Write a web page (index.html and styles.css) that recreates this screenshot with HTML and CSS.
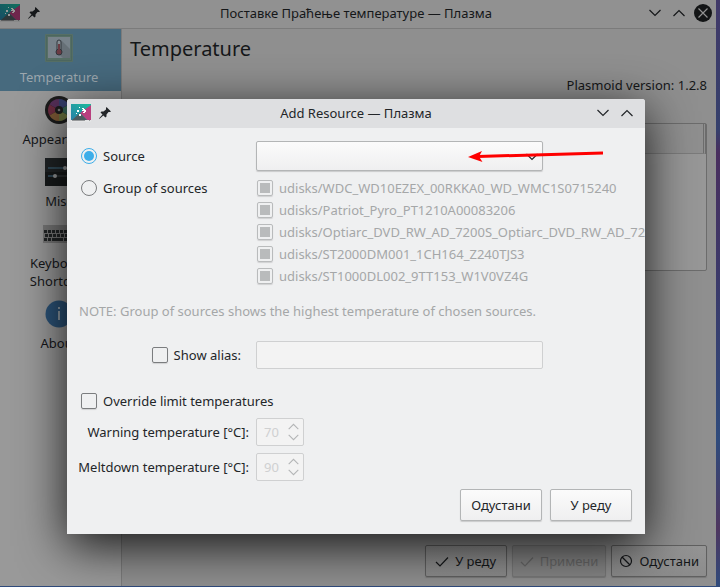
FILE: index.html
```html
<!DOCTYPE html>
<html lang="sr">
<head>
<meta charset="utf-8">
<title>Поставке Праћење температуре — Плазма</title>
<link rel="stylesheet" href="styles.css">
</head>
<body>
<svg class="defs" aria-hidden="true">
  <defs>
    <linearGradient id="teal" x1="0" y1="1" x2="1" y2="0"><stop offset="0" stop-color="#2980a8"/><stop offset="1" stop-color="#1abc9c"/></linearGradient>
    <symbol id="plasma" viewBox="0 0 20 18">
      <path d="M0 0h20v16H0z" fill="url(#teal)"/>
      <path d="M20 1v15h-4L9 9z" fill="#b8407f"/>
      <path d="M9 9l7 7H1z" fill="#4c5c60"/>
      <path d="M11 4h2v1h1v1h1v2h-1v1h-2V8h1V7h-2V6h1V5h-1zM6 6h2v2H6zM8 3h1v1H8zM8 10h2v2H8zM5 9h1v1H5z" fill="#fff"/>
      <path d="M0 16h20v2H0z" fill="#e3e4e5"/>
      <path d="M1 16h13v1H1zM18 16h1v1h-1z" fill="#97999b"/>
    </symbol>
    <symbol id="pin" viewBox="0 0 12 12">
      <path d="M7.500 0L12 4.500l-1 .5-1.500 0L7.500 7.500 7.500 9.500 6.500 10.500 4.300 8.400 .6 11.800 0 11.400 3.500 7.600 1.500 5.500 2.500 4.500 4.500 4.500 7 2.500 7 1z" fill="currentColor"/>
    </symbol>
    <symbol id="down" viewBox="0 0 12 8"><path d="M.5 1L6 6.500 11.500 1" fill="none" stroke="currentColor" stroke-width="1.200"/></symbol>
    <symbol id="up" viewBox="0 0 12 8"><path d="M.5 7L6 1.500 11.500 7" fill="none" stroke="currentColor" stroke-width="1.200"/></symbol>
    <symbol id="check" viewBox="0 0 14 14"><path d="M1 8l4 4 8-8.500" fill="none" stroke="currentColor" stroke-width="1.200"/></symbol>
    <symbol id="cancel" viewBox="0 0 14 14"><g fill="none" stroke="currentColor" stroke-width="1.200"><circle cx="7" cy="7" r="5.500"/><path d="M3 3l8 8"/></g></symbol>
  </defs>
</svg>

<div class="window">
  <header class="titlebar">
    <div class="title-icons"><svg class="app-icon faded"><use href="#plasma"/></svg><svg class="pin-icon"><use href="#pin"/></svg></div>
    <div class="title">Поставке Праћење температуре — Плазма</div>
    <div class="controls">
      <button aria-label="Minimize"><svg class="chevron"><use href="#down"/></svg></button>
      <button aria-label="Maximize"><svg class="chevron"><use href="#up"/></svg></button>
      <button aria-label="Close"><svg class="close" viewBox="0 0 18 18"><circle cx="9" cy="9" r="9" fill="#131516"/><path d="M4.500 4.500l9 9M13.500 4.500l-9 9" stroke="#919191" stroke-width="1.200"/></svg></button>
    </div>
  </header>
  <div class="content">
    <nav class="sidebar">
      <a href="#temperature" class="nav-item active">
        <svg viewBox="0 0 28 28"><rect width="28" height="28" rx="1" fill="#566f65"/><rect x="1.500" y="1.500" width="25" height="25" fill="none" stroke="#4d675f"/><rect x="3" y="3" width="22" height="21" fill="#77828a"/><path d="M16 6l9 9v9h-7l-6-5z" fill="#667077"/><rect x="12" y="6" width="4" height="11" rx="2" fill="#868e93" stroke="#30363c"/><circle cx="14" cy="18" r="3" fill="#6b3b43" stroke="#30363c"/><path d="M14 10v8" stroke="#6b3b43" stroke-width="2"/></svg>
        <span>Temperature</span>
      </a>
      <a href="#appearance" class="nav-item">
        <svg viewBox="0 0 28 28"><circle cx="14" cy="14" r="14" fill="#1c1c1c"/><path d="M14 14V3A11 11 0 0 0 4.500 8.500z" fill="#57305a"/><path d="M14 14L4.500 8.500A11 11 0 0 0 4.500 19.500z" fill="#6c2c40"/><path d="M14 14l-9.500 5.500A11 11 0 0 0 14 25z" fill="#7c5935"/><path d="M14 14v11a11 11 0 0 0 9.500-5.500z" fill="#68703c"/><path d="M14 14l9.500 5.500a11 11 0 0 0 0-11z" fill="#345f50"/><path d="M14 14l9.500-5.500A11 11 0 0 0 14 3z" fill="#353f6d"/><circle cx="14" cy="14" r="4" fill="#1c1c1c"/><circle cx="14" cy="14" r="1.300" fill="#777"/></svg>
        <span>Appearance</span>
      </a>
      <a href="#misc" class="nav-item">
        <svg viewBox="0 0 28 28"><path d="M0 0h28v28H0z" fill="#202426"/><path d="M0 14h28v14H0z" fill="#171a1b"/><path d="M3 10h22M3 18h22" stroke="#42494c"/><path d="M3 10h17M3 18h7" stroke="#35617b"/><circle cx="20" cy="10" r="2" fill="#989a9b"/><circle cx="10" cy="18" r="2" fill="#989a9b"/></svg>
        <span>Misc</span>
      </a>
      <a href="#shortcuts" class="nav-item">
        <svg class="keyboard" viewBox="0 0 32 28"><path d="M0 5h32v18H0z" fill="#777"/><path d="M1 11.500h30M2 15.500h29M1 19.500h30" stroke="#222526" stroke-width="3" stroke-dasharray="3 1"/><path d="M9 19.500h10" stroke="#222526" stroke-width="3"/></svg>
        <span>Keyboard Shortcuts</span>
      </a>
      <a href="#about" class="nav-item">
        <svg viewBox="0 0 28 28"><circle cx="14" cy="14" r="13.500" fill="#2b5378"/><path d="M13 11h2v9h-2zM13 7h2v2h-2z" fill="#8e9ba5"/></svg>
        <span>About</span>
      </a>
    </nav>
    <main class="page">
      <h1>Temperature</h1>
      <p class="version">Plasmoid version: 1.2.8</p>
      <div class="resources"><div class="resources-head"></div></div>
      <div class="actions">
        <button class="btn"><svg><use href="#check"/></svg>У реду</button>
        <button class="btn" disabled><svg><use href="#check"/></svg>Примени</button>
        <button class="btn"><svg><use href="#cancel"/></svg>Одустани</button>
      </div>
    </main>
  </div>
</div>

<section class="dialog" role="dialog" aria-labelledby="dialog-title">
  <header class="titlebar">
    <div class="title-icons"><svg class="app-icon"><use href="#plasma"/></svg><svg class="pin-icon"><use href="#pin"/></svg></div>
    <div class="title" id="dialog-title">Add Resource — Плазма</div>
    <div class="controls">
      <button aria-label="Minimize"><svg class="chevron"><use href="#down"/></svg></button>
      <button aria-label="Maximize"><svg class="chevron"><use href="#up"/></svg></button>
    </div>
  </header>
  <form class="form">
    <div class="row">
      <label class="option"><input type="radio" name="kind" checked>Source</label>
      <div class="combo"><select aria-label="Source"><option></option></select><svg><use href="#down"/></svg></div>
    </div>
    <div class="row group">
      <label class="option"><input type="radio" name="kind">Group of sources</label>
      <div class="sources">
        <label><input type="checkbox" checked disabled>udisks/WDC_WD10EZEX_00RKKA0_WD_WMC1S0715240</label>
        <label><input type="checkbox" checked disabled>udisks/Patriot_Pyro_PT1210A00083206</label>
        <label><input type="checkbox" checked disabled>udisks/Optiarc_DVD_RW_AD_7200S_Optiarc_DVD_RW_AD_72</label>
        <label><input type="checkbox" checked disabled>udisks/ST2000DM001_1CH164_Z240TJS3</label>
        <label><input type="checkbox" checked disabled>udisks/ST1000DL002_9TT153_W1V0VZ4G</label>
      </div>
    </div>
    <p class="note">NOTE: Group of sources shows the highest temperature of chosen sources.</p>
    <div class="row alias">
      <label class="option end"><input type="checkbox">Show alias:</label>
      <input class="field" type="text" aria-label="Alias" disabled>
    </div>
    <label class="option override"><input type="checkbox">Override limit temperatures</label>
    <div class="row limit">
      <label class="end" for="warning">Warning temperature [°C]:</label>
      <div class="spin"><input id="warning" type="number" value="70" disabled><span><svg><use href="#up"/></svg><svg><use href="#down"/></svg></span></div>
    </div>
    <div class="row limit">
      <label class="end" for="meltdown">Meltdown temperature [°C]:</label>
      <div class="spin"><input id="meltdown" type="number" value="90" disabled><span><svg><use href="#up"/></svg><svg><use href="#down"/></svg></span></div>
    </div>
    <div class="actions">
      <button type="button" class="btn">Одустани</button>
      <button type="button" class="btn">У реду</button>
    </div>
  </form>
  <svg class="pointer" viewBox="0 0 136 14"><path d="M10 7.500L135 4" stroke="#fe0000" stroke-width="3"/><path d="M0 8l14-6-3 5.500 3.500 5.500z" fill="#fe0000"/></svg>
</section>
</body>
</html>
```

FILE: styles.css
```css
* { box-sizing: border-box; }

body {
  margin: 0;
  min-height: 100vh;
  display: flex;
  position: relative;
  overflow: hidden;
  padding: 0 4px 1px 0;
  background: linear-gradient(#413968, #35406c 22%, #492e5e 26%, #3a3b6b 50%, #2f4b7c 75%, #4e365f 90%, #2f4b7c);
  font: 13px/18px "Noto Sans", sans-serif;
  color: #232629;
}

button, input, select { font: inherit; color: inherit; margin: 0; }
h1, p { margin: 0; font-weight: 400; }
.defs { position: absolute; width: 0; height: 0; }

.window {
  flex: 1;
  display: flex;
  flex-direction: column;
  background: #8f8f8f;
  color: #151719;
}

.titlebar {
  display: grid;
  grid-template-columns: 1fr auto 1fr;
  align-items: center;
  height: 29px;
  padding-bottom: 2px;
}
.window > .titlebar { background: #919191; border-bottom: 1px solid #7b7b7b; padding-right: 4px; }
.title-icons { display: flex; align-items: center; gap: 8px; }
.app-icon { width: 20px; height: 18px; }
.faded { filter: brightness(.6); }
.pin-icon { width: 12px; height: 12px; }
.controls { display: flex; justify-content: flex-end; gap: 6px; }
.controls button {
  display: grid;
  place-items: center;
  width: 18px;
  height: 18px;
  padding: 0;
  border: 0;
  background: none;
}
.chevron { width: 12px; height: 8px; }
.close { width: 18px; height: 18px; }

.content { flex: 1; display: flex; }

.sidebar {
  width: 122px;
  background: #999;
  border-right: 1px solid #7b7b7b;
}
.nav-item {
  display: flex;
  flex-direction: column;
  align-items: center;
  gap: 6px;
  padding: 5px 23px 5px 20px;
  color: inherit;
  text-align: center;
  text-decoration: none;
}
.nav-item svg { width: 28px; height: 28px; }
.nav-item .keyboard { width: 32px; }
.active { background: #476a7e; color: #9ca7ae; }

.page {
  flex: 1;
  display: flex;
  flex-direction: column;
  padding: 6px 9px 9px 8px;
}
h1 { font-size: 20px; line-height: 28px; }
.version { text-align: right; margin-top: 13px; }
.resources {
  height: 148px;
  margin-top: 29px;
  border: 1px solid #6c6c6c;
  border-radius: 2px;
  background: #979797;
}
.resources-head {
  height: 30px;
  border-right: 3px double #6c6c6c;
  border-bottom: 1px solid #7b7b7b;
  background: #8f8f8f;
}
.actions { display: flex; justify-content: flex-end; gap: 6px; }
.page .actions { margin-top: auto; gap: 5px; }

.btn {
  display: flex;
  align-items: center;
  justify-content: center;
  gap: 6px;
  min-width: 82px;
  height: 32px;
  padding: 0 7px;
  border: 1px solid #b3b5b6;
  border-radius: 2px;
  background: linear-gradient(#fbfbfb, #efeff0);
  box-shadow: 0 1px 1px #c9cacb;
}
.btn svg { width: 14px; height: 14px; }
.page .btn {
  border-color: #606060;
  background: linear-gradient(#949494, #8c8c8c);
  box-shadow: 0 1px 1px #777;
}
.page .btn:disabled { color: #686868; border-color: #777; background: #858585; }

.dialog {
  position: absolute;
  top: 99px;
  left: 67px;
  right: 75px;
  background: #eff0f1;
  border-radius: 3px 3px 0 0;
  box-shadow: 0 12px 48px rgba(0, 0, 0, .85);
}
.dialog > .titlebar {
  padding-left: 4px;
  padding-right: 4px;
  background: #dedfe1;
  border-radius: 3px 3px 0 0;
}
.dialog .controls { padding-right: 5px; }

.form {
  display: flex;
  flex-direction: column;
  overflow: hidden;
  padding: 13px 13px 13px 12px;
}
.row {
  display: grid;
  grid-template-columns: 170px minmax(0, 1fr);
  align-items: center;
  column-gap: 7px;
}
.option { display: flex; align-items: center; gap: 6px; padding-left: 2px; }
.end { display: flex; justify-content: flex-end; white-space: nowrap; }
.option.end { padding-right: 8px; }

input[type="radio"], input[type="checkbox"] {
  appearance: none;
  flex: none;
  display: grid;
  place-items: center;
  width: 16px;
  height: 16px;
  border: 1px solid #7b7d7f;
  border-radius: 2px;
  box-shadow: 0 1px 1px #d0d1d2;
}
input[type="radio"] { border-radius: 50%; box-shadow: none; }
input[type="radio"]:checked { border-color: #3daee9; }
input[type="radio"]:checked::before {
  content: "";
  width: 10px;
  height: 10px;
  border-radius: 50%;
  background: #3daee9;
}
input[type="checkbox"]:disabled { border-color: #b9bbbc; }
input[type="checkbox"]:checked::before {
  content: "";
  width: 10px;
  height: 10px;
  background: #b9bbbc;
}

.combo { display: grid; align-items: center; width: 287px; }
.combo > * { grid-area: 1 / 1; }
.combo select {
  appearance: none;
  width: 100%;
  height: 30px;
  border: 1px solid #b3b5b6;
  border-radius: 2px;
  background: linear-gradient(#fbfbfb, #efeff0);
  box-shadow: 0 1px 1px #c9cacb;
}
.combo svg { justify-self: end; width: 12px; height: 8px; margin: 2px 5px 0 0; pointer-events: none; }

.group { align-items: start; margin-top: 6px; }
.group label { line-height: 22px; }
.sources label {
  display: flex;
  align-items: center;
  gap: 6px;
  padding-left: 1px;
  white-space: nowrap;
  color: #a5a7a8;
}
.note { margin-top: 15px; color: #a5a7a8; }
.alias { margin-top: 21px; }
.field {
  width: 287px;
  height: 28px;
  border: 1px solid #cfd0d1;
  border-radius: 2px;
  background: #f3f3f3;
}
.override { margin-top: 23px; margin-bottom: 1px; }
.limit { margin-top: 7px; }
.spin {
  display: flex;
  align-items: center;
  width: 48px;
  height: 28px;
  padding: 0 4px 0 7px;
  border: 1px solid #cfd0d1;
  border-radius: 2px;
  background: #f3f3f3;
}
.spin input {
  appearance: textfield;
  width: 24px;
  padding: 0;
  border: 0;
  background: none;
  color: #cfd0d1;
}
.spin input::-webkit-inner-spin-button { appearance: none; margin: 0; }
.spin span { display: grid; gap: 4px; color: #b3b5b6; }
.spin svg { display: block; width: 11px; height: 7px; }
.form .actions { gap: 8px; margin-top: 8px; }

.pointer {
  position: absolute;
  top: 50px;
  left: 401px;
  width: 136px;
  height: 14px;
  pointer-events: none;
}
```
